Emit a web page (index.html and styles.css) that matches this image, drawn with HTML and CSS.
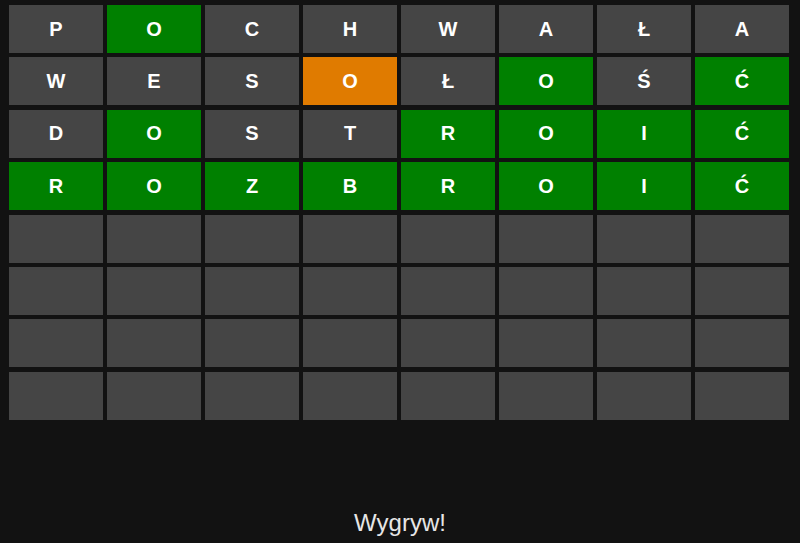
FILE: index.html
```html
<!DOCTYPE html>
<html lang="pl">
<head>
  <meta charset="UTF-8">
  <meta name="viewport" content="width=device-width, initial-scale=1.0" />
  <title>Literaki</title>
  <link rel="stylesheet" href="styles.css">
</head>
<body>
  <div class="board">
    <div class="tile">P</div><div class="tile hit">O</div><div class="tile">C</div><div class="tile">H</div><div class="tile">W</div><div class="tile">A</div><div class="tile">Ł</div><div class="tile">A</div>
    <div class="tile">W</div><div class="tile">E</div><div class="tile">S</div><div class="tile near">O</div><div class="tile">Ł</div><div class="tile hit">O</div><div class="tile">Ś</div><div class="tile hit">Ć</div>
    <div class="tile">D</div><div class="tile hit">O</div><div class="tile">S</div><div class="tile">T</div><div class="tile hit">R</div><div class="tile hit">O</div><div class="tile hit">I</div><div class="tile hit">Ć</div>
    <div class="tile hit">R</div><div class="tile hit">O</div><div class="tile hit">Z</div><div class="tile hit">B</div><div class="tile hit">R</div><div class="tile hit">O</div><div class="tile hit">I</div><div class="tile hit">Ć</div>
    <div class="tile"></div><div class="tile"></div><div class="tile"></div><div class="tile"></div><div class="tile"></div><div class="tile"></div><div class="tile"></div><div class="tile"></div>
    <div class="tile"></div><div class="tile"></div><div class="tile"></div><div class="tile"></div><div class="tile"></div><div class="tile"></div><div class="tile"></div><div class="tile"></div>
    <div class="tile"></div><div class="tile"></div><div class="tile"></div><div class="tile"></div><div class="tile"></div><div class="tile"></div><div class="tile"></div><div class="tile"></div>
    <div class="tile"></div><div class="tile"></div><div class="tile"></div><div class="tile"></div><div class="tile"></div><div class="tile"></div><div class="tile"></div><div class="tile"></div>
  </div>

  <p class="message">Wygryw!</p>
</body>
</html>
```

FILE: styles.css
```css
body {
  margin: 0;
  background: #121212;
  font-family: "Liberation Sans", Arial, sans-serif;
  color: #fff;
  height: 543px;
  display: flex;
  flex-direction: column;
}

.board {
  display: grid;
  grid-template-columns: repeat(8, 94px);
  grid-template-rows: repeat(8, 48px);
  gap: 4.4px 4px;
  padding: 5px 9px 0;
}

.tile {
  background: #454545;
  display: flex;
  align-items: center;
  justify-content: center;
  font-size: 20px;
  font-weight: bold;
}

.tile.hit {
  background: #008000;
}

.tile.near {
  background: #e07b00;
}

.message {
  margin: auto 0 6px;
  text-align: center;
  font-size: 24px;
  color: #e6e6e6;
}
```
